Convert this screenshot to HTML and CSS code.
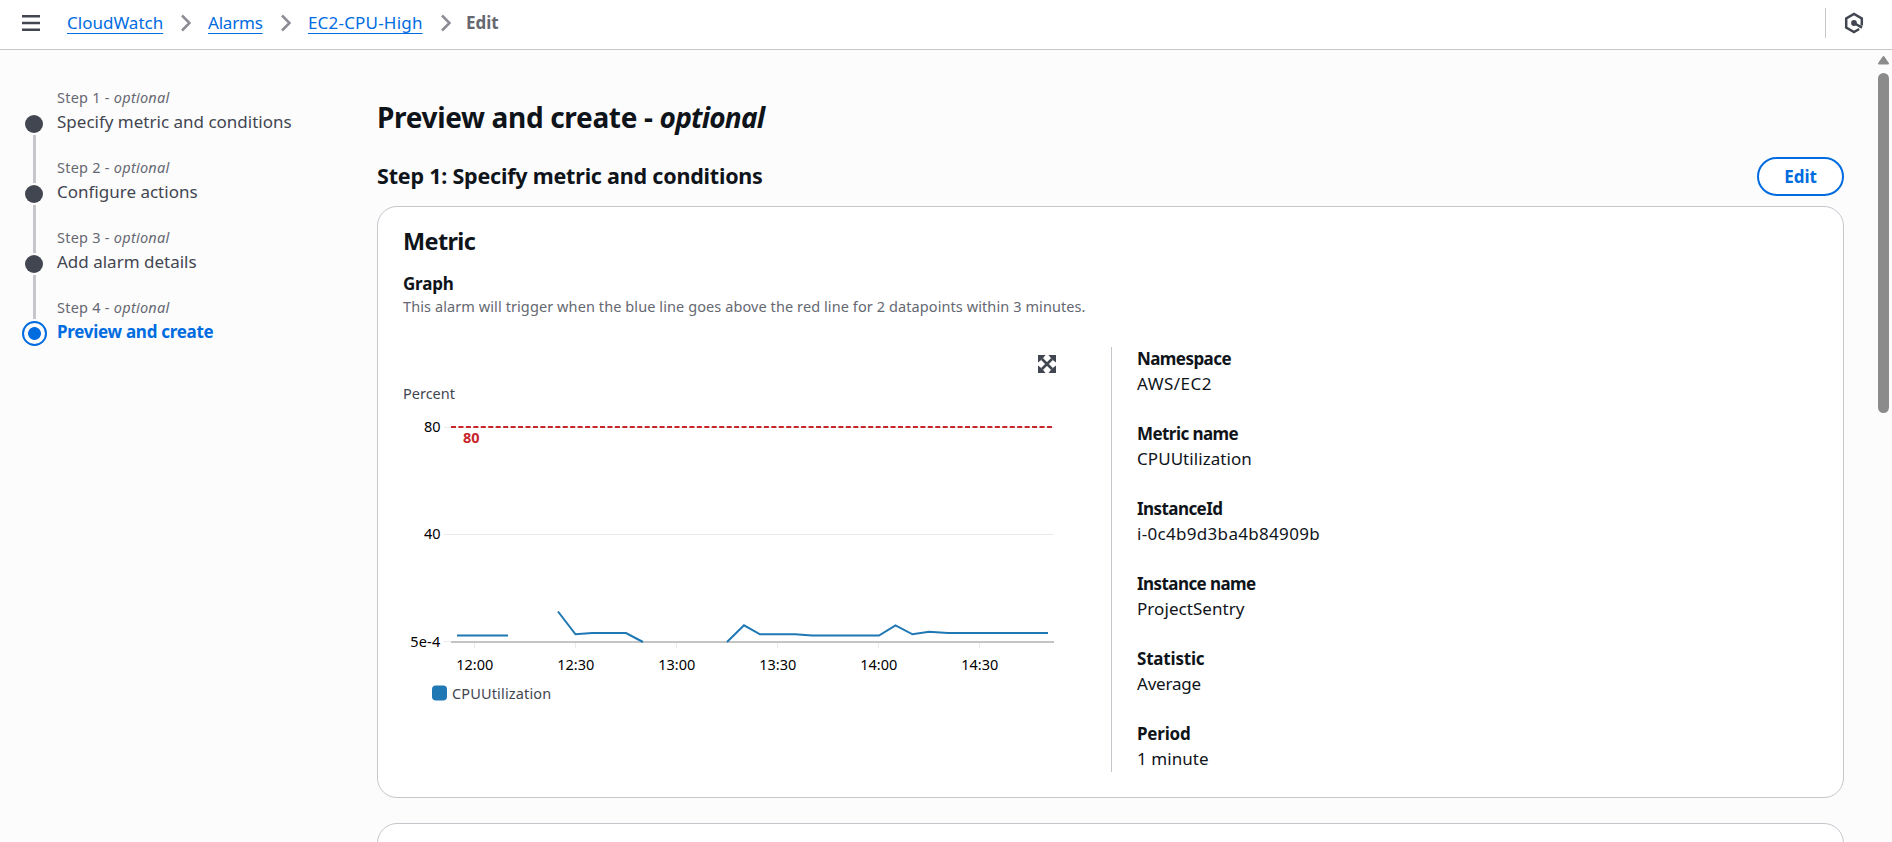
FILE: index.html
```html
<!DOCTYPE html>
<html lang="en">
<head>
<meta charset="utf-8">
<title>CloudWatch - Edit alarm</title>
<link rel="stylesheet" href="styles.css">
</head>
<body>
<header class="topbar">
  <svg class="menu" width="18" height="16" viewBox="0 0 18 16"><path d="M0 1.300h18M0 8h18M0 14.700h18"/></svg>
  <nav class="crumbs">
    <a class="link">CloudWatch</a>
    <svg class="chev" width="10" height="18" viewBox="0 0 10 18"><path d="M1 1.500 8.500 9 1 16.500"/></svg>
    <a class="link tight">Alarms</a>
    <svg class="chev" width="10" height="18" viewBox="0 0 10 18"><path d="M1 1.500 8.500 9 1 16.500"/></svg>
    <a class="link loose">EC2-CPU-High</a>
    <svg class="chev" width="10" height="18" viewBox="0 0 10 18"><path d="M1 1.500 8.500 9 1 16.500"/></svg>
    <span class="here">Edit</span>
  </nav>
  <div class="tools">
    <svg class="hex" width="20" height="22" viewBox="0 0 20 22"><path d="M17.800 13.600V6.400L10 2 2.200 6.400v9.200L10 20l5.200-3M10 11l8 4.600"/><circle cx="10" cy="11" r="2.900"/></svg>
  </div>
</header>
<div class="shell">
  <nav class="steps">
    <div class="step"><div class="rail"><i class="dot"></i><i class="line"></i></div><div><div class="step-no">Step 1 - <em>optional</em></div><div class="step-name">Specify metric and conditions</div></div></div>
    <div class="step"><div class="rail"><i class="dot"></i><i class="line"></i></div><div><div class="step-no">Step 2 - <em>optional</em></div><div class="step-name">Configure actions</div></div></div>
    <div class="step"><div class="rail"><i class="dot"></i><i class="line last"></i></div><div><div class="step-no">Step 3 - <em>optional</em></div><div class="step-name">Add alarm details</div></div></div>
    <div class="step"><div class="rail"><i class="ring"></i></div><div><div class="step-no">Step 4 - <em>optional</em></div><div class="step-name current">Preview and create</div></div></div>
  </nav>
  <main class="content">
    <h1>Preview and create - <em>optional</em></h1>
    <div class="section-head"><h2>Step 1: Specify metric and conditions</h2><button class="edit">Edit</button></div>
    <section class="card">
      <h3>Metric</h3>
      <div class="label">Graph</div>
      <p class="desc">This alarm will trigger when the blue line goes above the red line for 2 datapoints within 3 minutes.</p>
      <div class="cols">
        <svg class="chart" width="708" height="425" viewBox="403 347 708 425">
          <g class="expand" transform="translate(1038 355)"><path d="M4 4l10 10M14 4L4 14"/><path class="corner" d="M0 0h7.500L5 3.200 3.200 5 0 7.500zM18 0h-7.500l2.500 3.200 1.800 1.800 3.200 2.500zM0 18h7.500L5 14.800 3.200 13 0 10.500zM18 18h-7.500l2.500-3.200 1.800-1.800 3.200-2.500z"/></g>
          <text class="muted" x="403" y="399">Percent</text>
          <path class="grid" d="M444 427.500h610M444 534.500h610M444 641.500h8"/>
          <path class="grid" d="M474.500 643v5M575.500 643v5M676.500 643v5M777.500 643v5M878.500 643v5M979.500 643v5"/>
          <path class="axis" d="M451 642h603"/>
          <path class="threshold" d="M451 427h603"/>
          <g class="tick end"><text x="440.500" y="432">80</text><text x="440.500" y="539">40</text><text class="loose" x="440.500" y="647">5e-4</text></g>
          <text class="limit" x="463" y="443">80</text>
          <g class="tick mid"><text x="474.700" y="670">12:00</text><text x="575.700" y="670">12:30</text><text x="676.700" y="670">13:00</text><text x="777.700" y="670">13:30</text><text x="878.700" y="670">14:00</text><text x="979.700" y="670">14:30</text></g>
          <path class="series" d="M457 635.500H508M558 611.500 575.500 634.300 592 633H626L643 642M727 642 744 625.300 760 634.300H795L812 635.500H879L895.500 625.300 912.500 634.300 929 631.800 948 633H1048"/>
          <rect class="key" x="432" y="685.500" width="15" height="15" rx="4"/>
          <text class="muted legend" x="452" y="699">CPUUtilization</text>
        </svg>
        <dl class="facts">
          <div><dt>Namespace</dt><dd class="looser">AWS/EC2</dd></div>
          <div><dt>Metric name</dt><dd>CPUUtilization</dd></div>
          <div><dt>InstanceId</dt><dd class="loose">i-0c4b9d3ba4b84909b</dd></div>
          <div><dt>Instance name</dt><dd>ProjectSentry</dd></div>
          <div><dt class="tight">Statistic</dt><dd class="tight">Average</dd></div>
          <div><dt class="tight">Period</dt><dd>1 minute</dd></div>
        </dl>
      </div>
    </section>
    <section class="card next"></section>
  </main>
  <div class="scroll"><svg width="13" height="10" viewBox="0 0 13 10"><path d="M6.500 2 11 8.500H2z"/></svg><i></i></div>
</div>
</body>
</html>
```
FILE: styles.css
```css
* { box-sizing: border-box; margin: 0; padding: 0; }
body { width: 1892px; height: 842px; overflow: hidden; background: #fcfcfd; color: #0f141a; font: 17px/25px "Noto Sans", sans-serif; }

.topbar { display: flex; align-items: center; height: 50px; padding: 0 0 4px 22px; background: #fff; border-bottom: 1px solid #c6c6cd; }
.menu { fill: none; stroke: #424650; stroke-width: 2.500; }
.crumbs { display: flex; align-items: center; margin-left: 27px; gap: 18px; }
.link { color: #006ce0; text-decoration: underline 1px; text-underline-offset: 4px; }
.link.loose { margin-left: 0.500px; }
.chev { margin: 0 -1.500px 0 0.300px; fill: none; stroke: #8c8c94; stroke-width: 2.500; }
.here { margin-left: -1.500px; color: #656871; font-weight: 700; }
.tools { display: flex; align-items: center; height: 30px; margin-left: auto; padding: 0 28px 0 18px; border-left: 1px solid #c6c6cd; }
.hex { fill: none; stroke: #424650; stroke-width: 2.500; }
.hex circle { fill: #424650; stroke: none; }

.shell { display: flex; height: 792px; overflow: hidden; }
.steps { width: 377px; padding: 35px 0 0 21px; }
.step { display: flex; height: 70px; gap: 10px; }
.rail { display: flex; flex-direction: column; align-items: center; width: 26px; padding-top: 30px; }
.dot { flex: none; width: 18px; height: 18px; border-radius: 50%; background: #424650; }
.line { flex: none; width: 3px; height: 48px; margin: 2px 0; background: #c6c6cd; }
.line.last { height: 44px; }
.ring { flex: none; width: 25px; height: 25px; margin-top: -4px; border: 2.500px solid #006ce0; border-radius: 50%; background: radial-gradient(circle, #006ce0 6px, transparent 6.800px); }
.step-no { font-size: 14.500px; letter-spacing: 0.250px; color: #656871; }
.step-name { margin-top: -1px; color: #424650; }
.step-name.current { letter-spacing: -0.280px; color: #006ce0; font-weight: 700; }

.content { width: 1467px; padding-top: 48px; }
h1 { font-size: 28px; line-height: 38px; letter-spacing: -0.330px; }
h1 em { letter-spacing: -0.800px; }
.section-head { display: flex; align-items: center; justify-content: space-between; height: 39px; margin-top: 21px; }
h2 { padding-bottom: 1px; font-size: 21.500px; line-height: 30px; letter-spacing: -0.210px; }
.edit { width: 87px; height: 39px; border: 2.500px solid #006ce0; border-radius: 20px; background: #fff; color: #006ce0; font: 700 17px/25px "Noto Sans", sans-serif; }
.card { height: 592px; margin-top: 10px; padding: 19px 25px; border: 1px solid #c6c6cd; border-radius: 20px; background: #fff; }
.card.next { margin-top: 25px; }
h3 { font-size: 23.500px; line-height: 30px; letter-spacing: -0.650px; }
.label { margin-top: 15px; font-weight: 700; letter-spacing: -0.200px; }
.desc { font-size: 14.500px; line-height: 20px; letter-spacing: 0.090px; color: #656871; }
.cols { display: flex; margin-top: 31px; height: 425px; }
.facts { display: flex; flex-direction: column; gap: 25px; padding-left: 25px; border-left: 1px solid #c6c6cd; }
.facts div:first-child { margin-top: -1px; }
dt { font-weight: 700; letter-spacing: -0.570px; }
dd { letter-spacing: 0.060px; }
.tight { letter-spacing: -0.200px; }
.loose { letter-spacing: 0.200px; }
dd.loose { letter-spacing: 0.310px; }
.looser { letter-spacing: 0.490px; }

.chart { flex: none; }
.expand path { fill: none; stroke: #424650; stroke-width: 2.500; }
.expand .corner { fill: #424650; stroke: none; }
.chart text { font-size: 14.500px; }
.muted { fill: #424650; }
.legend { letter-spacing: 0.150px; }
.tick { font-size: 14.500px; }
.grid { stroke: #eaeaea; }
.axis { stroke: #c4c4c4; stroke-width: 2; }
.threshold { stroke: #c7252b; stroke-width: 2; stroke-dasharray: 5 2.450; }
.end { text-anchor: end; }
.mid { text-anchor: middle; }
.limit { fill: #c7252b; font-weight: 700; }
.series { fill: none; stroke: #1f77b4; stroke-width: 2; }
.key { fill: #1f77b4; }

.scroll { display: flex; flex-direction: column; align-items: center; width: 13px; margin: 5px 2px 0 auto; }
.scroll svg { fill: #8b8b8b; stroke: #8b8b8b; stroke-width: 2; stroke-linejoin: round; }
.scroll i { width: 11px; height: 340px; margin-top: 8px; border-radius: 6px; background: #8b8b8b; }
```
